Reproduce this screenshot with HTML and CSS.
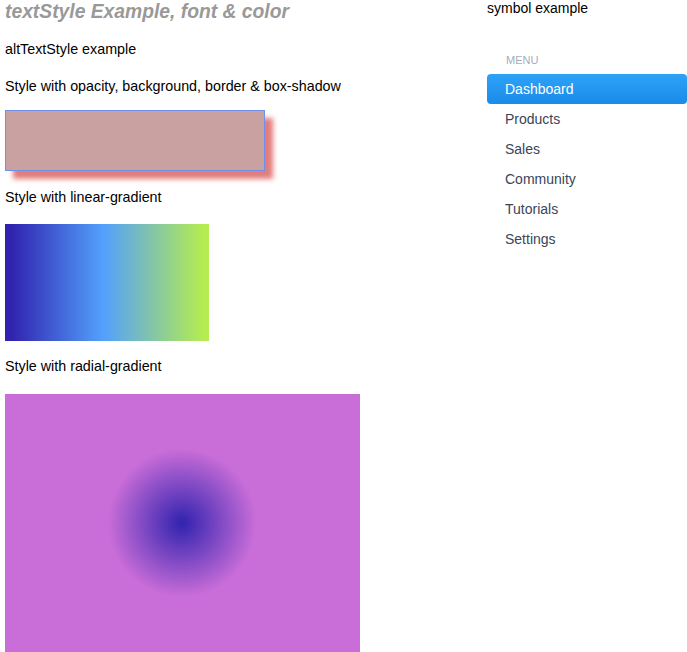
FILE: index.html
```html
<!DOCTYPE html>
<html>
<head>
<meta charset="utf-8">
<link rel="stylesheet" href="styles.css">
</head>
<body>
<div class="page">
  <div class="left">
    <div class="title">textStyle Example, font &amp; color</div>
    <div class="label alt">altTextStyle example</div>
    <div class="label opacity">Style with opacity, background, border &amp; box-shadow</div>
    <div class="shadow-box"></div>
    <div class="label">Style with linear-gradient</div>
    <div class="linear-box"></div>
    <div class="label">Style with radial-gradient</div>
    <div class="radial-box"></div>
  </div>
  <div class="right">
    <div class="symbol">symbol example</div>
    <nav class="menu">
      <div class="menu-title">MENU</div>
      <div class="menu-item active">Dashboard</div>
      <div class="menu-item">Products</div>
      <div class="menu-item">Sales</div>
      <div class="menu-item">Community</div>
      <div class="menu-item">Tutorials</div>
      <div class="menu-item">Settings</div>
    </nav>
  </div>
</div>
</body>
</html>
```
FILE: styles.css
```css
html, body {
  margin: 0;
  padding: 0;
  background: #ffffff;
  overflow: hidden;
}
body {
  font-family: "Liberation Sans", Arial, sans-serif;
  color: #000;
}
.page {
  display: flex;
  align-items: flex-start;
}
.left {
  width: 482px;
  padding-left: 5px;
  display: flex;
  flex-direction: column;
  align-items: flex-start;
}
.title {
  font-size: 19.3px;
  font-weight: bold;
  font-style: italic;
  color: #999999;
  line-height: 24px;
  height: 24px;
}
.label {
  font-size: 14.3px;
  line-height: 17px;
  margin-top: 18px;
  white-space: nowrap;
}
.label.alt {
  margin-top: 17px;
}
.label.opacity {
  margin-top: 20px;
}
.shadow-box {
  margin-top: 15px;
  width: 258px;
  height: 59px;
  background: rgba(180, 125, 125, 0.72);
  border: 1px solid #6f8fe8;
  box-shadow: 8px 8px 5px rgba(224, 110, 110, 0.9);
}
.shadow-box + .label {
  margin-top: 18px;
}
.linear-box {
  margin-top: 18px;
  width: 204px;
  height: 117px;
  background: linear-gradient(to right, #3023ae 3%, #53a0fd 48%, #b4ec51 97%);
}
.linear-box + .label {
  margin-top: 17px;
}
.radial-box {
  margin-top: 19px;
  width: 355px;
  height: 270px;
  background: radial-gradient(circle 74px at 177px 129px, #3023ae 0%, #c96dd8 100%);
}
.right {
  width: 200px;
  display: flex;
  flex-direction: column;
}
.symbol {
  font-size: 14px;
  line-height: 17px;
}
.menu {
  margin-top: 36px;
  display: flex;
  flex-direction: column;
}
.menu-title {
  font-size: 11px;
  line-height: 15px;
  color: #a4adbd;
  padding-left: 19px;
  margin-bottom: 6px;
}
.menu-item {
  height: 30px;
  line-height: 30px;
  font-size: 14px;
  color: #3a4557;
  padding-left: 18px;
  border-radius: 4px;
}
.menu-item.active {
  background: linear-gradient(to bottom, #2ea2f8, #1a8be9);
  color: #ffffff;
}
```
